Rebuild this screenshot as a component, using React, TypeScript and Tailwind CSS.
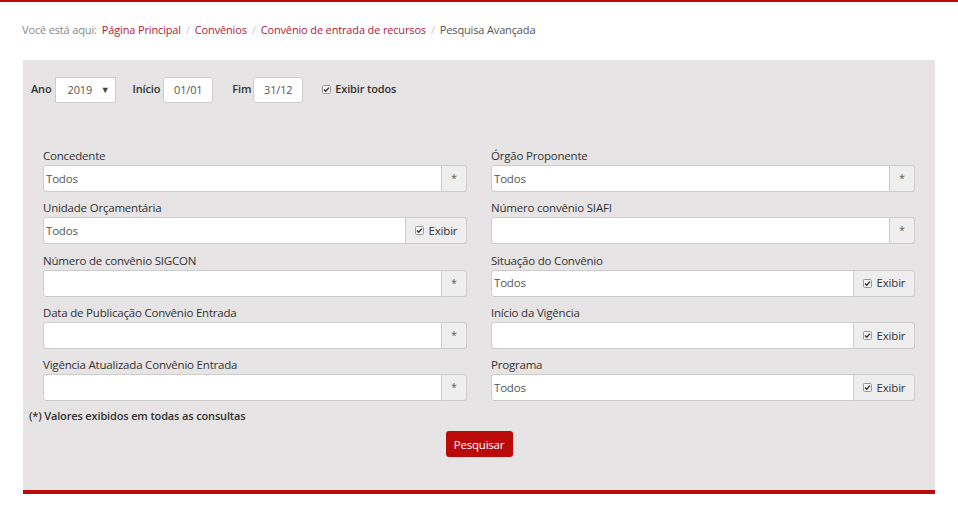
// Pesquisa Avançada - Convênio de entrada de recursos
// Advanced search form with filter fields

type Addon = 'star' | 'exibir';

const fields: { label: string; value?: string; addon: Addon }[][] = [
  [
    { label: 'Concedente', value: 'Todos', addon: 'star' },
    { label: 'Unidade Orçamentária', value: 'Todos', addon: 'exibir' },
    { label: 'Número de convênio SIGCON', addon: 'star' },
    { label: 'Data de Publicação Convênio Entrada', addon: 'star' },
    { label: 'Vigência Atualizada Convênio Entrada', addon: 'star' },
  ],
  [
    { label: 'Órgão Proponente', value: 'Todos', addon: 'star' },
    { label: 'Número convênio SIAFI', addon: 'star' },
    { label: 'Situação do Convênio', value: 'Todos', addon: 'exibir' },
    { label: 'Início da Vigência', addon: 'exibir' },
    { label: 'Programa', value: 'Todos', addon: 'exibir' },
  ],
];

function Check() {
  return (
    <svg width="9" height="9" viewBox="0 0 9 9" className="shrink-0">
      <rect x="0.5" y="0.5" width="8" height="8" rx="1" fill="#f4f4f4" stroke="#9a9a9a" />
      <path d="M2 4.6 L3.7 6.3 L7 2.6" fill="none" stroke="#333" strokeWidth="1.4" />
    </svg>
  );
}

function Field({ label, value, addon }: { label: string; value?: string; addon: Addon }) {
  return (
    <div className="flex flex-col">
      <label className="h-[18px] leading-[18px] text-[11.5px] tracking-[-0.2px] text-[#333]">{label}</label>
      <div className="flex h-[27px]">
        <div className="flex-1 flex items-center bg-white border border-[#ccc] rounded-l-[3px] px-[2px] text-[11.5px] tracking-[-0.2px] text-[#555]">
          {value}
        </div>
        {addon === 'star' ? (
          <div className="w-[25px] flex items-center justify-center bg-[#eee] border border-l-0 border-[#ccc] rounded-r-[3px] text-[10px] text-[#555]">
            *
          </div>
        ) : (
          <div className="w-[61px] flex items-center justify-center gap-[5px] bg-[#eee] border border-l-0 border-[#ccc] rounded-r-[3px] text-[11.5px] tracking-[-0.2px] text-[#333]">
            <Check />
            <span>Exibir</span>
          </div>
        )}
      </div>
    </div>
  );
}

export default function App() {
  return (
    <div className="w-[958px] h-[513px] bg-white font-['Open_Sans',sans-serif] border-t-[2px] border-[#bb0a0a]">
      <nav className="flex items-center h-[56px] pl-[22px] text-[11px] tracking-[-0.15px] pt-[1px]">
        <span className="text-[#888] mr-[5px]">Você está aqui:</span>
        <span className="text-[#b5173b]">Página Principal</span>
        <span className="text-[#ccc] px-[5px]">/</span>
        <span className="text-[#b5173b]">Convênios</span>
        <span className="text-[#ccc] px-[5px]">/</span>
        <span className="text-[#b5173b]">Convênio de entrada de recursos</span>
        <span className="text-[#ccc] px-[5px]">/</span>
        <span className="text-[#555]">Pesquisa Avançada</span>
      </nav>

      <div className="ml-[23px] w-[912px] h-[434px] mt-[2px] bg-[#e6e4e5] border-b-4 border-[#bb0a0a] flex flex-col">
        <div className="flex items-center h-[26px] mt-[17px] pl-[8px] text-[11px] tracking-[-0.15px] text-[#333] font-semibold">
          <span className="-mt-[2px]">Ano</span>
          <div className="ml-[3px] w-[61px] h-[26px] bg-white border border-[#ccc] flex items-center font-normal text-[#555]">
            <span className="ml-[12px]">2019</span>
            <span className="ml-auto mr-[5px] text-[9px] text-[#444]">▼</span>
          </div>
          <span className="ml-[17px] -mt-[2px]">Início</span>
          <div className="ml-[3px] w-[50px] h-[26px] bg-white border border-[#ccc] rounded-[3px] flex items-center justify-center font-normal text-[#555]">
            01/01
          </div>
          <span className="ml-[19px] -mt-[2px]">Fim</span>
          <div className="ml-[2px] w-[50px] h-[26px] bg-white border border-[#ccc] rounded-[3px] flex items-center justify-center font-normal text-[#555]">
            31/12
          </div>
          <span className="ml-[19px] -mt-[2px] flex items-center gap-[4px]">
            <Check />
            Exibir todos
          </span>
        </div>

        <div className="grid grid-cols-2 gap-x-[24px] px-[20px] mt-[44px]">
          {fields.map((col, i) => (
            <div key={i} className="flex flex-col gap-[7.3px]">
              {col.map((f) => (
                <Field key={f.label} {...f} />
              ))}
            </div>
          ))}
        </div>

        <p className="pl-[6px] mt-[6px] leading-[17px] text-[11px] tracking-[-0.15px] font-semibold text-[#333]">
          (*) Valores exibidos em todas as consultas
        </p>

        <div className="flex justify-center mt-[7px]">
          <button className="w-[67px] h-[26px] bg-[#bb0a0a] rounded-[3px] text-white text-[11.5px] tracking-[-0.2px]">Pesquisar</button>
        </div>
      </div>
    </div>
  );
}
